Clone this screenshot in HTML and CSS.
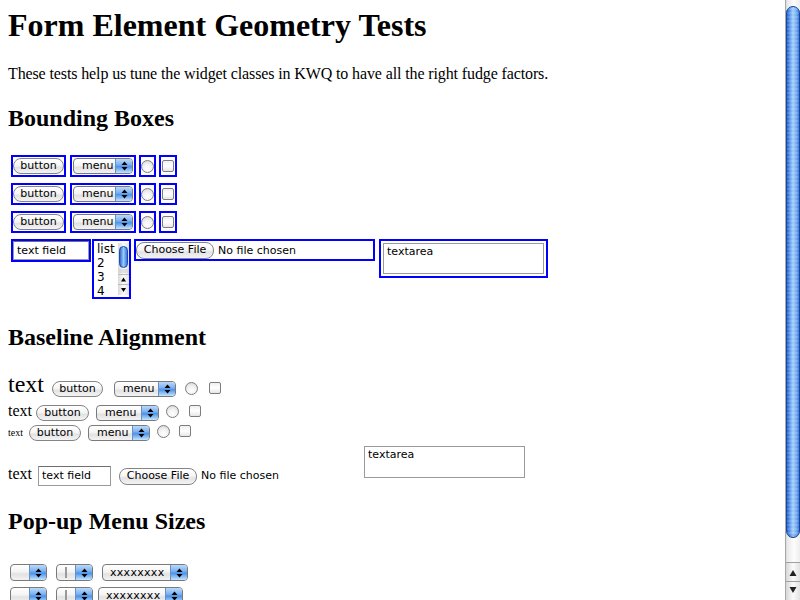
FILE: index.html
```html
<!DOCTYPE html>
<html>
<head>
<meta charset="utf-8">
<title>Form Element Geometry Tests</title>
<link rel="stylesheet" href="styles.css">
</head>
<body>
<div class="page">
  <main class="content">
    <h1>Form Element Geometry Tests</h1>
    <p class="intro">These tests help us tune the widget classes in KWQ to have all the right fudge factors.</p>

    <h2>Bounding Boxes</h2>
    <div class="bb-rows">
      <div class="bb-row">
        <span class="bb bb-btn"><span class="btn">button</span></span>
        <span class="bb bb-menu"><span class="menu"><span class="menu-label">menu</span><span class="menu-arrows"><svg width="7" height="10" viewBox="0 0 7 10"><path d="M3.5 0.5 L6.5 4 L0.5 4 Z M0.5 6 L6.5 6 L3.5 9.5 Z" fill="#000"/></svg></span></span></span>
        <span class="bb bb-radio"><span class="radio"></span></span>
        <span class="bb bb-check"><span class="check"></span></span>
      </div>
      <div class="bb-row">
        <span class="bb bb-btn"><span class="btn">button</span></span>
        <span class="bb bb-menu"><span class="menu"><span class="menu-label">menu</span><span class="menu-arrows"><svg width="7" height="10" viewBox="0 0 7 10"><path d="M3.5 0.5 L6.5 4 L0.5 4 Z M0.5 6 L6.5 6 L3.5 9.5 Z" fill="#000"/></svg></span></span></span>
        <span class="bb bb-radio"><span class="radio"></span></span>
        <span class="bb bb-check"><span class="check"></span></span>
      </div>
      <div class="bb-row">
        <span class="bb bb-btn"><span class="btn">button</span></span>
        <span class="bb bb-menu"><span class="menu"><span class="menu-label">menu</span><span class="menu-arrows"><svg width="7" height="10" viewBox="0 0 7 10"><path d="M3.5 0.5 L6.5 4 L0.5 4 Z M0.5 6 L6.5 6 L3.5 9.5 Z" fill="#000"/></svg></span></span></span>
        <span class="bb bb-radio"><span class="radio"></span></span>
        <span class="bb bb-check"><span class="check"></span></span>
      </div>
      <div class="bb-row">
        <span class="bb bb-field"><span class="field">text field</span></span>
        <span class="bb bb-list">
          <span class="list">
            <span class="list-items"><span>list</span><span>2</span><span>3</span><span>4</span></span>
            <span class="list-scroll">
              <svg width="11" height="52" viewBox="0 0 11 52">
                <defs>
                  <linearGradient id="lthumb" x1="0" y1="0" x2="1" y2="0">
                    <stop offset="0" stop-color="#1f5fcf"/>
                    <stop offset="0.5" stop-color="#9ccaf8"/>
                    <stop offset="1" stop-color="#2d6bd4"/>
                  </linearGradient>
                  <linearGradient id="ltrack" x1="0" y1="0" x2="1" y2="0">
                    <stop offset="0" stop-color="#d8d8d8"/>
                    <stop offset="0.5" stop-color="#fafafa"/>
                    <stop offset="1" stop-color="#e4e4e4"/>
                  </linearGradient>
                </defs>
                <rect x="0" y="0" width="11" height="52" fill="url(#ltrack)"/>
                <rect x="1.5" y="3.5" width="8" height="21" rx="4" fill="url(#lthumb)" stroke="#1a4fae"/>
                <rect x="0" y="26" width="11" height="4" fill="#d0d0d0" opacity="0.6"/>
                <line x1="0" y1="31.5" x2="11" y2="31.5" stroke="#bcbcbc"/>
                <path d="M5.5 34.5 L8 38.5 L3 38.5 Z" fill="#000"/>
                <line x1="0" y1="41.5" x2="11" y2="41.5" stroke="#bcbcbc"/>
                <path d="M3 45 L8 45 L5.5 49 Z" fill="#000"/>
              </svg>
            </span>
          </span>
        </span>
        <span class="bb bb-file"><span class="btn btn-file">Choose File</span><span class="file-label">No file chosen</span></span>
        <span class="bb bb-ta"><span class="ta">textarea</span></span>
      </div>
    </div>

    <h2 class="h2-baseline">Baseline Alignment</h2>
    <div class="bl-rows">
      <div class="bl-row bl-row-1">
        <span class="bl-text bl-text-24">text</span>
        <span class="btn">button</span>
        <span class="menu menu-wide"><span class="menu-label">menu</span><span class="menu-arrows"><svg width="7" height="10" viewBox="0 0 7 10"><path d="M3.5 0.5 L6.5 4 L0.5 4 Z M0.5 6 L6.5 6 L3.5 9.5 Z" fill="#000"/></svg></span></span>
        <span class="radio"></span>
        <span class="check"></span>
      </div>
      <div class="bl-row bl-row-2">
        <span class="bl-text bl-text-16">text</span>
        <span class="btn">button</span>
        <span class="menu menu-wide"><span class="menu-label">menu</span><span class="menu-arrows"><svg width="7" height="10" viewBox="0 0 7 10"><path d="M3.5 0.5 L6.5 4 L0.5 4 Z M0.5 6 L6.5 6 L3.5 9.5 Z" fill="#000"/></svg></span></span>
        <span class="radio"></span>
        <span class="check"></span>
      </div>
      <div class="bl-row bl-row-3">
        <span class="bl-text bl-text-10">text</span>
        <span class="btn">button</span>
        <span class="menu menu-wide"><span class="menu-label">menu</span><span class="menu-arrows"><svg width="7" height="10" viewBox="0 0 7 10"><path d="M3.5 0.5 L6.5 4 L0.5 4 Z M0.5 6 L6.5 6 L3.5 9.5 Z" fill="#000"/></svg></span></span>
        <span class="radio"></span>
        <span class="check"></span>
      </div>
      <div class="bl-row-4">
        <span class="bl-inline">
          <span class="bl-text bl-text-16">text</span>
          <span class="field field-inline">text field</span>
          <span class="file-inline"><span class="btn btn-file">Choose File</span><span class="file-label">No file chosen</span></span>
        </span>
        <span class="ta ta-inline">textarea</span>
      </div>
    </div>

    <h2 class="h2-popup">Pop-up Menu Sizes</h2>
    <div class="pop-rows">
      <div class="pop-row">
        <span class="menu pop-empty"><span class="menu-label"></span><span class="menu-arrows"><svg width="7" height="10" viewBox="0 0 7 10"><path d="M3.5 0.5 L6.5 4 L0.5 4 Z M0.5 6 L6.5 6 L3.5 9.5 Z" fill="#000"/></svg></span></span>
        <span class="menu pop-empty"><span class="menu-label"><span class="bar"></span></span><span class="menu-arrows"><svg width="7" height="10" viewBox="0 0 7 10"><path d="M3.5 0.5 L6.5 4 L0.5 4 Z M0.5 6 L6.5 6 L3.5 9.5 Z" fill="#000"/></svg></span></span>
        <span class="menu pop-x"><span class="menu-label">xxxxxxxx</span><span class="menu-arrows"><svg width="7" height="10" viewBox="0 0 7 10"><path d="M3.5 0.5 L6.5 4 L0.5 4 Z M0.5 6 L6.5 6 L3.5 9.5 Z" fill="#000"/></svg></span></span>
      </div>
      <div class="pop-row pop-row-2">
        <span class="menu pop-empty"><span class="menu-label"></span><span class="menu-arrows"><svg width="7" height="10" viewBox="0 0 7 10"><path d="M3.5 0.5 L6.5 4 L0.5 4 Z M0.5 6 L6.5 6 L3.5 9.5 Z" fill="#000"/></svg></span></span>
        <span class="menu pop-empty"><span class="menu-label"><span class="bar"></span></span><span class="menu-arrows"><svg width="7" height="10" viewBox="0 0 7 10"><path d="M3.5 0.5 L6.5 4 L0.5 4 Z M0.5 6 L6.5 6 L3.5 9.5 Z" fill="#000"/></svg></span></span>
        <span class="menu pop-x pop-x2"><span class="menu-label">xxxxxxxx</span><span class="menu-arrows"><svg width="7" height="10" viewBox="0 0 7 10"><path d="M3.5 0.5 L6.5 4 L0.5 4 Z M0.5 6 L6.5 6 L3.5 9.5 Z" fill="#000"/></svg></span></span>
      </div>
    </div>
  </main>

  <aside class="scrollbar">
    <svg width="15" height="600" viewBox="0 0 15 600">
      <defs>
        <linearGradient id="track" x1="0" y1="0" x2="1" y2="0">
          <stop offset="0" stop-color="#c9c9c9"/>
          <stop offset="0.15" stop-color="#e9e9e9"/>
          <stop offset="0.6" stop-color="#fdfdfd"/>
          <stop offset="1" stop-color="#ededed"/>
        </linearGradient>
        <linearGradient id="thumb" x1="0" y1="0" x2="1" y2="0">
          <stop offset="0" stop-color="#1b55c4"/>
          <stop offset="0.2" stop-color="#4c8ce6"/>
          <stop offset="0.5" stop-color="#a6cff9"/>
          <stop offset="0.8" stop-color="#6aa6ee"/>
          <stop offset="1" stop-color="#2a63c8"/>
        </linearGradient>
        <pattern id="stripes" x="0" y="0" width="15" height="4" patternUnits="userSpaceOnUse">
          <rect x="0" y="0" width="15" height="2" fill="#ffffff" opacity="0.12"/>
        </pattern>
        <linearGradient id="arrowbg" x1="0" y1="0" x2="1" y2="0">
          <stop offset="0" stop-color="#d6d6d6"/>
          <stop offset="0.5" stop-color="#fbfbfb"/>
          <stop offset="1" stop-color="#e2e2e2"/>
        </linearGradient>
      </defs>
      <rect x="0" y="0" width="15" height="600" fill="url(#track)"/>
      <line x1="0.5" y1="0" x2="0.5" y2="600" stroke="#a8a8a8"/>
      <rect x="1.5" y="6.5" width="13" height="531" rx="6.5" fill="url(#thumb)" stroke="#1747a6"/>
      <rect x="2" y="7" width="12" height="530" rx="6" fill="url(#stripes)"/>
      <ellipse cx="8" cy="536" rx="5" ry="2" fill="#000" opacity="0.08"/>
      <rect x="1" y="562" width="14" height="38" fill="url(#arrowbg)"/>
      <line x1="1" y1="562.5" x2="15" y2="562.5" stroke="#a0a0a0"/>
      <path d="M8 570 L11.5 576 L4.5 576 Z" fill="#222"/>
      <line x1="1" y1="581.5" x2="15" y2="581.5" stroke="#a0a0a0"/>
      <path d="M4.5 587 L11.5 587 L8 593 Z" fill="#222"/>
    </svg>
  </aside>
</div>
</body>
</html>
```

FILE: styles.css
```css
* { box-sizing: border-box; }

html, body {
  margin: 0;
  height: 100%;
  overflow: hidden;
  background: #fff;
}

body {
  font-family: "Liberation Serif", "Times New Roman", serif;
  color: #000;
}

.page {
  display: flex;
  height: 600px;
}

.content {
  flex: 1;
  min-width: 0;
  padding: 7px 8px 0;
}

.scrollbar {
  flex: none;
  width: 15px;
  height: 600px;
}

.scrollbar svg { display: block; }

h1 {
  font-size: 32px;
  line-height: 37px;
  margin: 0;
  font-weight: bold;
}

.intro {
  font-size: 16px;
  line-height: 18px;
  margin: 21px 0 0;
  letter-spacing: -0.12px;
}

h2 {
  font-size: 24px;
  line-height: 28px;
  margin: 21px 0 0;
  font-weight: bold;
}

/* ---------- widgets ---------- */

.btn, .menu, .field, .ta, .file-label, .list {
  font-family: "DejaVu Sans", "Liberation Sans", sans-serif;
  font-size: 11px;
  color: #000;
}

.btn {
  display: inline-flex;
  align-items: center;
  height: 16px;
  line-height: 14px;
  padding: 0 7px;
  border: 1px solid #858585;
  border-radius: 8px;
  background: linear-gradient(#ffffff, #f6f6f6 45%, #e3e3e3 60%, #f4f4f4 100%);
  white-space: nowrap;
  flex: none;
}

.btn-file {
  height: 17px;
  padding: 0 7px;
}

.menu {
  display: inline-flex;
  align-items: stretch;
  height: 16px;
  border: 1px solid #7a7a7a;
  border-radius: 4px;
  overflow: hidden;
  background: linear-gradient(#ffffff, #f4f4f4 45%, #e2e2e2 60%, #f3f3f3 100%);
  flex: none;
}

.menu-label {
  flex: 1;
  display: flex;
  align-items: center;
  line-height: 14px;
  padding-left: 8px;
  white-space: nowrap;
}

.menu-arrows {
  flex: none;
  width: 17px;
  display: flex;
  align-items: center;
  justify-content: center;
  border-left: 1px solid #6b8fc0;
  background: linear-gradient(#bcd9fa, #7db3f1 40%, #4d92ea 55%, #9ccaf8 85%, #c9e4fd 100%);
}

.menu-arrows svg { display: block; }

.radio {
  display: inline-block;
  width: 13px;
  height: 13px;
  border: 1px solid #7d7d7d;
  border-radius: 50%;
  background: radial-gradient(circle at 50% 70%, #ffffff 0%, #f2f2f2 45%, #d2d2d2 100%);
  flex: none;
}

.check {
  display: inline-block;
  width: 12px;
  height: 12px;
  border: 1px solid #7d7d7d;
  border-radius: 2px;
  background: linear-gradient(#f0f0f0, #ffffff 50%, #e6e6e6 100%);
  flex: none;
}

.field {
  display: flex;
  align-items: center;
  height: 19px;
  width: 76px;
  padding-left: 3px;
  border: 1px solid #9a9a9a;
  border-top-color: #6f6f6f;
  background: #fff;
  white-space: nowrap;
}

.ta {
  display: block;
  border: 1px solid #9a9a9a;
  background: #fff;
  padding: 1px 3px;
  line-height: 14px;
}

.file-label {
  margin-left: 4px;
  white-space: nowrap;
}

/* ---------- bounding boxes ---------- */

.bb-rows {
  display: flex;
  flex-direction: column;
  gap: 6px;
  margin-top: 23px;
  padding-left: 3px;
}

.bb-row {
  display: flex;
  align-items: flex-start;
  gap: 3px;
}

.bb {
  display: inline-flex;
  align-items: center;
  justify-content: center;
  height: 22px;
  border: 2px solid #0000ff;
  flex: none;
}

.bb-btn { width: 55px; margin-right: 1px; }
.bb-btn .btn { width: 51px; justify-content: center; }
.bb-menu { width: 66px; }
.bb-menu .menu { width: 60px; }
.bb-radio { width: 17px; }
.bb-check { width: 18px; }

.bb-field { width: 80px; height: 23px; }
.bb-field .field { width: 76px; }

.bb-list {
  width: 39px;
  height: 60px;
  margin-left: -2px;
  align-items: stretch;
}

.list {
  display: flex;
  width: 35px;
  height: 56px;
  background: #fff;
}

.list-items {
  flex: 1;
  display: flex;
  flex-direction: column;
  padding: 1px 0 0 3px;
  font-size: 12px;
  line-height: 14px;
}

.list-scroll {
  flex: none;
  width: 11px;
  padding-top: 2px;
  display: flex;
}

.bb-file {
  width: 241px;
  justify-content: flex-start;
  padding-left: 0;
}

.bb-file .btn { width: 78px; justify-content: center; }

.bb-ta {
  width: 169px;
  height: 39px;
  margin-left: 1px;
  align-items: stretch;
  padding: 2px;
}

.bb-ta .ta { width: 100%; }

/* ---------- baseline alignment ---------- */

.h2-baseline { margin-top: 24px; }

.bl-rows {
  display: flex;
  flex-direction: column;
  gap: 4px;
  margin-top: 20px;
}

.bl-row {
  display: flex;
  align-items: baseline;
}

.bl-row .radio { align-self: flex-end; margin-bottom: 3px; }
.bl-row .check { align-self: flex-end; margin-bottom: 4px; }

.bl-text { white-space: nowrap; }
.bl-text-24 { font-size: 24px; line-height: 27px; margin-right: 8px; }
.bl-text-16 { font-size: 16px; line-height: 18px; margin-right: 4px; }
.bl-text-10 { font-size: 10px; line-height: 12px; margin-right: 6px; }

.bl-row .btn { width: 51px; justify-content: center; }
.menu-wide { width: 62px; }

.bl-row-1 .menu { margin-left: 11px; }
.bl-row-1 .radio { margin-left: 9px; }
.bl-row-1 .check { margin-left: 11px; }

.bl-row-2 .btn { width: 53px; }
.bl-row-2 .menu { margin-left: 7px; width: 63px; }
.bl-row-2 .radio { margin-left: 7px; }
.bl-row-2 .check { margin-left: 10px; }

.bl-row-3 .btn { width: 52px; }
.bl-row-3 .menu { margin-left: 7px; }
.bl-row-3 .radio { margin-left: 7px; }
.bl-row-3 .check { margin-left: 9px; }

.bl-row-4 {
  display: flex;
  align-items: flex-end;
  margin-top: 1px;
}

.bl-inline {
  display: flex;
  align-items: baseline;
  flex: none;
}

.bl-inline .bl-text-16 { margin-right: 6px; }

.field-inline {
  width: 73px;
  height: 20px;
  line-height: 18px;
}

.file-inline {
  display: inline-flex;
  align-items: baseline;
  width: 241px;
  margin-left: 8px;
  flex: none;
}

.file-inline .btn { width: 78px; justify-content: center; }

.ta-inline {
  width: 161px;
  height: 32px;
  margin-left: 4px;
  margin-bottom: 8px;
  flex: none;
}

/* ---------- pop-up sizes ---------- */

.h2-popup { margin-top: 21px; }

.pop-rows {
  display: flex;
  flex-direction: column;
  gap: 6px;
  margin-top: 29px;
  padding-left: 2px;
}

.pop-row {
  display: flex;
  gap: 9px;
}

.pop-row .menu { height: 17px; }
.pop-empty { width: 37px; }
.pop-x { width: 86px; }
.pop-x .menu-label { padding-left: 7px; letter-spacing: 0.3px; }
.pop-row-2 .pop-x2 { width: 85px; margin-left: -4px; }

.bar {
  display: block;
  width: 2px;
  height: 11px;
  background: #9a9a9a;
}
```
